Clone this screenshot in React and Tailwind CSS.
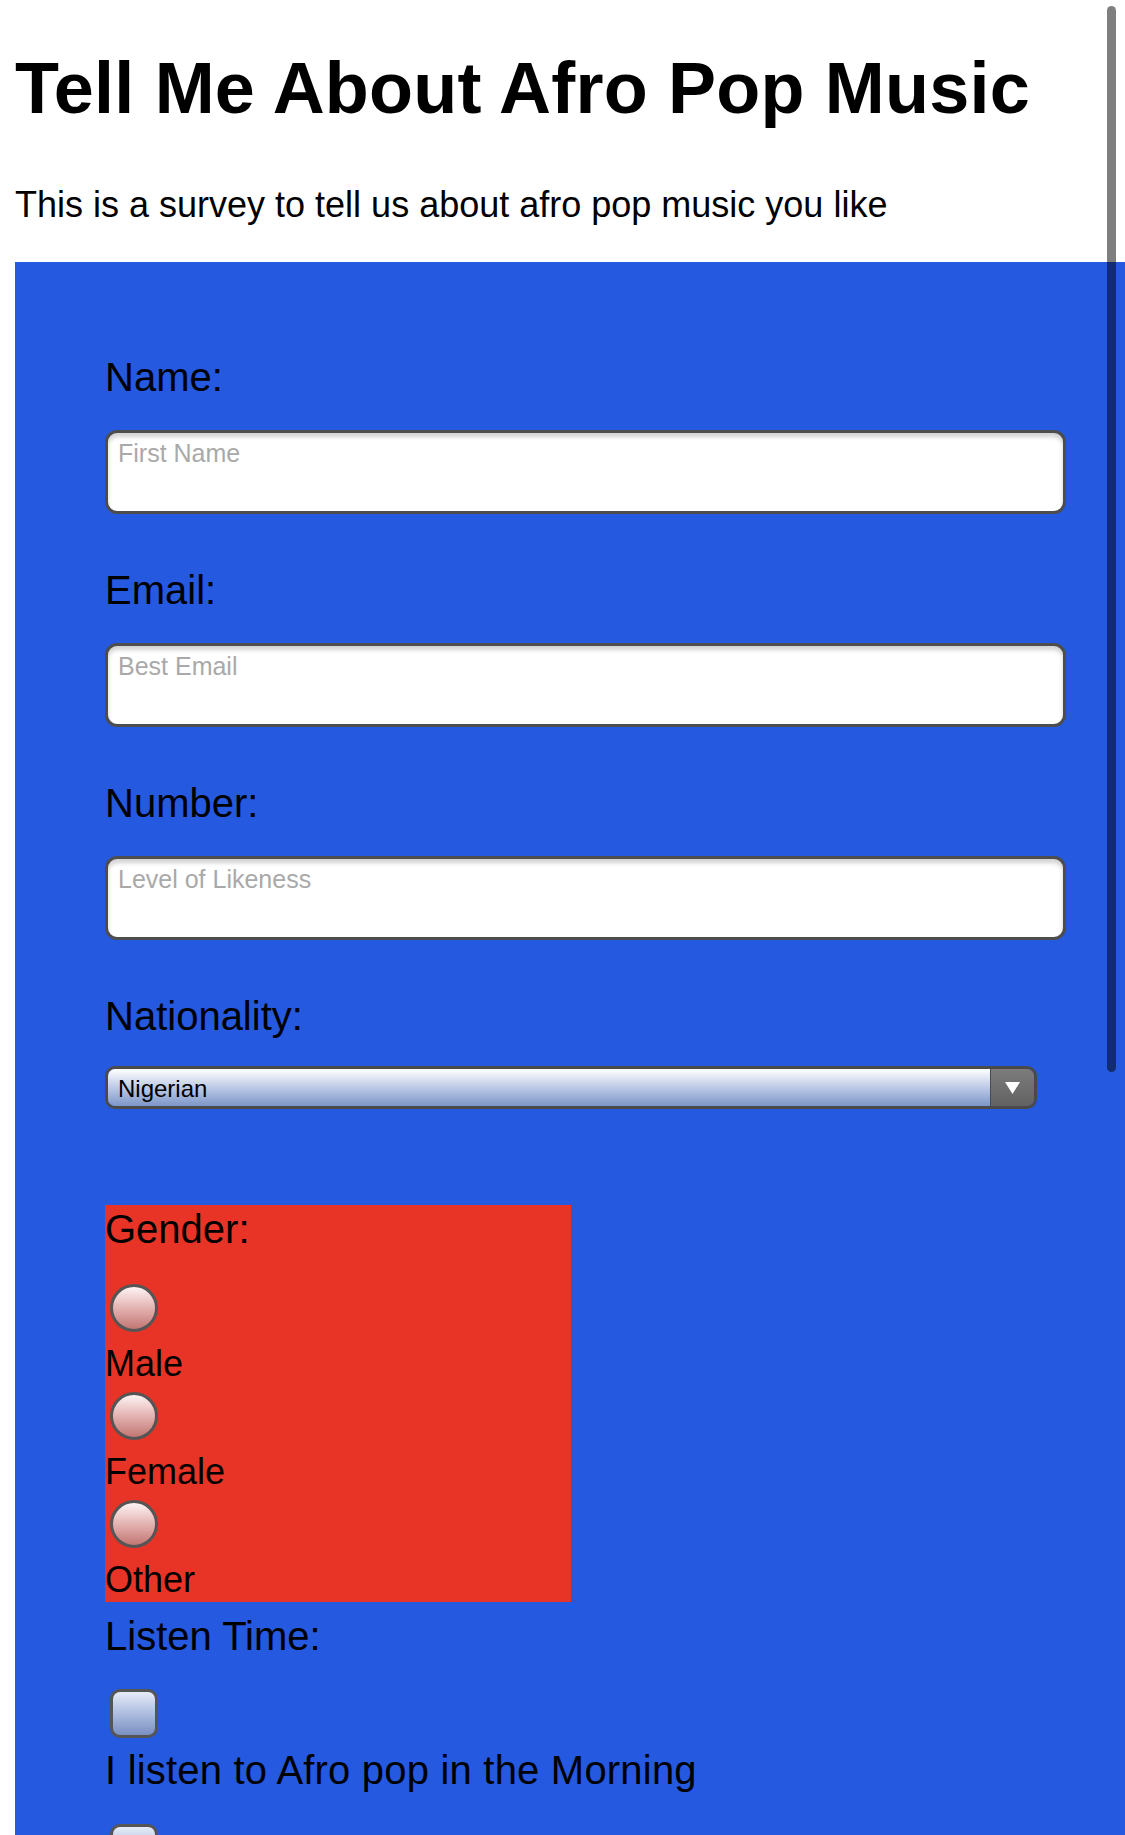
import React from "react";

function Label({ children, className = "" }) {
  return <div className={"text-[40px] leading-[46px] text-black " + className}>{children}</div>;
}

function Option({ children, className = "" }) {
  return <div className={"text-[36px] leading-[46px] text-black " + className}>{children}</div>;
}

function TextBox({ placeholder, type = "text" }) {
  return (
    <input
      type={type}
      placeholder={placeholder}
      className="mt-[30px] block h-[84px] w-[961px] rounded-[12px] border-[3px] border-[#4d4d4d] bg-white pl-[10px] pt-[6px] pb-[44px] text-[25px] leading-[28px] text-black shadow-[inset_0_4px_4px_rgba(0,0,0,0.18)] outline-none placeholder:text-[#a9a9a9]"
    />
  );
}

function Radio({ className = "" }) {
  return (
    <div
      className={
        "ml-[5px] h-[48px] w-[48px] rounded-full border-[3px] border-[#555555] bg-gradient-to-b from-[#fdf4f4] via-[#e3b3b2] to-[#c27673] " +
        className
      }
    />
  );
}

function Checkbox({ className = "" }) {
  return (
    <div
      className={
        "ml-[5px] h-[49px] w-[48px] rounded-[10px] border-[3px] border-[#555555] bg-gradient-to-b from-[#e6ecf7] via-[#aebde0] to-[#7a90c2] " +
        className
      }
    />
  );
}

export default function App() {
  return (
    <div className="relative h-[1835px] w-[1125px] overflow-hidden bg-white font-['Liberation_Sans',Arial,Helvetica,sans-serif] text-black">
      <div className="pl-[15px]">
        <h1 className="pt-[48px] text-[72px] font-bold leading-[80px] tracking-[0.2px]">Tell Me About Afro Pop Music</h1>
        <p className="mt-[57px] text-[36px] leading-[40px]">This is a survey to tell us about afro pop music you like</p>

        <form className="mt-[37px] h-[1700px] bg-[#2459e0] pl-[90px] pt-[92px]">
          <Label>Name:</Label>
          <TextBox placeholder="First Name" />

          <Label className="mt-[53px]">Email:</Label>
          <TextBox placeholder="Best Email" type="email" />

          <Label className="mt-[53px]">Number:</Label>
          <TextBox placeholder="Level of Likeness" type="text" />

          <Label className="mt-[53px]">Nationality:</Label>
          <div className="mt-[27px] flex h-[43px] w-[932px] overflow-hidden rounded-[10px] border-[3px] border-[#4a4a4a]">
            <div className="flex-1 bg-gradient-to-b from-[#ffffff] via-[#bdcae6] to-[#7d96c8] pl-[10px] text-[24px] leading-[39px] text-black">
              Nigerian
            </div>
            <div className="flex w-[44px] items-center justify-center border-l-[1px] border-[#4a4a4a] bg-gradient-to-b from-[#7c7c7c] to-[#626262]">
              <svg width="15" height="12" viewBox="0 0 15 12" className="mt-[1px]">
                <polygon points="0,0 15,0 7.5,12" fill="#ffffff" />
              </svg>
            </div>
          </div>

          <div className="mt-[96px] h-[397px] w-[466px] bg-[#e83426] pt-[1px]">
            <Label>Gender:</Label>
            <Radio className="mt-[32px]" />
            <Option className="mt-[9px]">Male</Option>
            <Radio className="mt-[5px]" />
            <Option className="mt-[9px]">Female</Option>
            <Radio className="mt-[5px]" />
            <Option className="mt-[9px]">Other</Option>
          </div>

          <Label className="mt-[11px]">Listen Time:</Label>
          <Checkbox className="mt-[30px]" />
          <Label className="mt-[9px] tracking-[0.2px]">I listen to Afro pop in the Morning</Label>
          <Checkbox className="mt-[31px]" />
          <Label className="mt-[9px] tracking-[0.2px]">I listen to Afro pop in the Afternoon</Label>
        </form>
      </div>

      <div className="absolute left-[1107px] top-[6px] h-[1066px] w-[9px] rounded-full bg-black/50" />
    </div>
  );
}
